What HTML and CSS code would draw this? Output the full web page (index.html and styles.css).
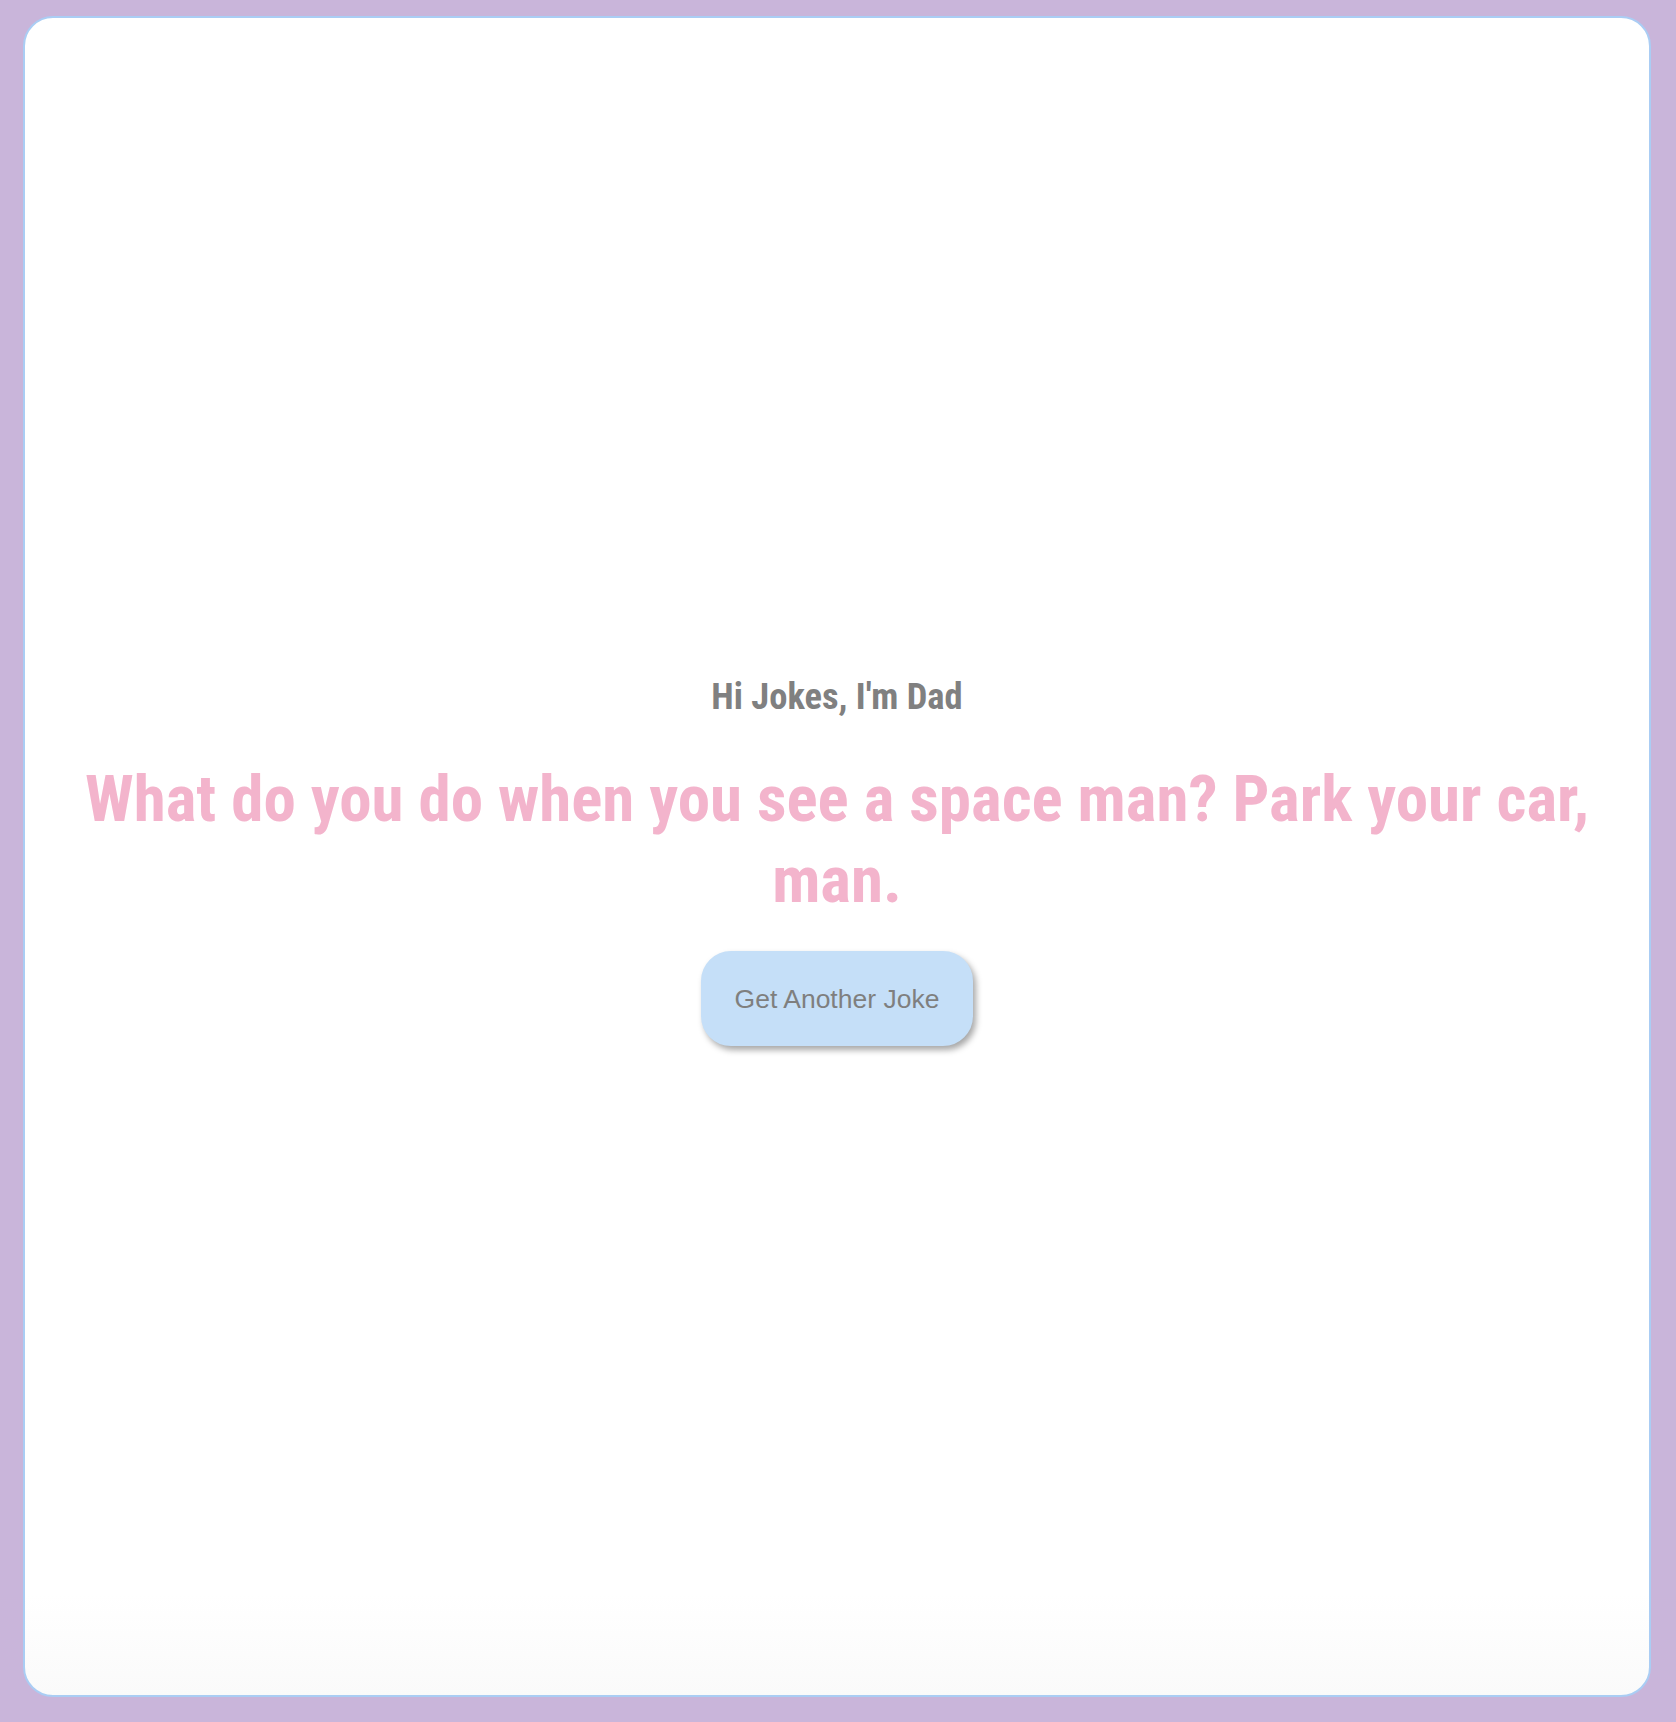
FILE: index.html
```html
<!DOCTYPE html>
<html lang="en">
<head>
<meta charset="utf-8">
<title>Dad Jokes</title>
<link rel="stylesheet" href="styles.css">
</head>
<body>
<main class="card">
  <h2 class="title">Hi Jokes, I'm Dad</h2>
  <h1 class="joke">What do you do when you see a space man? Park your car, man.</h1>
  <button class="btn" type="button">Get Another Joke</button>
</main>
</body>
</html>
```
FILE: styles.css
```css
html, body {
  margin: 0;
  height: 100%;
}
body {
  box-sizing: border-box;
  background: #c9b5da;
  padding: 16px 25px 25px 23px;
  display: flex;
}
.card {
  flex: 1;
  box-sizing: border-box;
  background: linear-gradient(#ffffff 94%, #fafafa);
  border: 2px solid #aacdf4;
  border-radius: 30px;
  padding: 8px 40px 0;
  display: flex;
  flex-direction: column;
  align-items: center;
  justify-content: center;
  text-align: center;
}
.title {
  margin: 0;
  font-family: Roboto, "Liberation Sans", sans-serif;
  font-stretch: condensed;
  font-weight: 700;
  font-size: 36.5px;
  line-height: 44px;
  color: #808080;
}
.joke {
  margin: 40px 0 30px;
  font-family: Roboto, "Liberation Sans", sans-serif;
  font-stretch: condensed;
  font-weight: 700;
  font-size: 65px;
  line-height: 81px;
  color: #f3b4cc;
}
.btn {
  font-family: "Liberation Sans", Arial, sans-serif;
  font-size: 26.5px;
  color: #7f7f7f;
  background: #c5dff8;
  border: 2px solid #c5dff8;
  border-radius: 30px;
  padding: 33px 32px 32px;
  line-height: 26px;
  box-shadow: 3px 4px 6px rgba(0, 0, 0, 0.35);
  cursor: pointer;
}
```
